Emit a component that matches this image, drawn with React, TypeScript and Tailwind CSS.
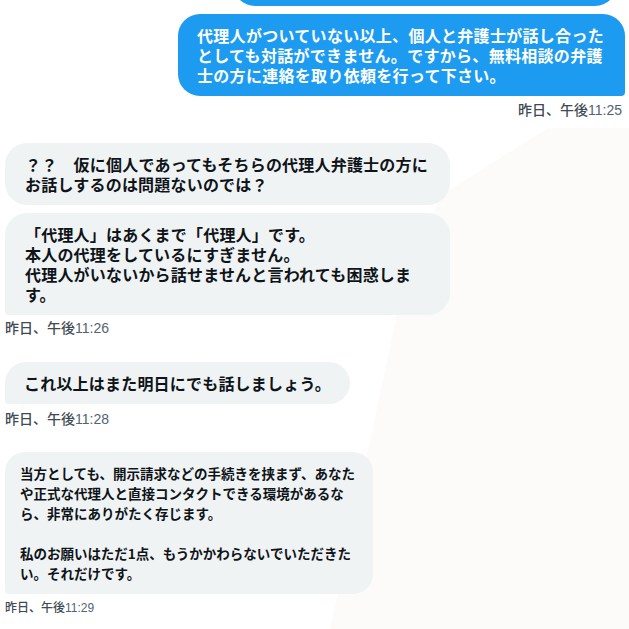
const jp = "font-['Noto_Sans_CJK_JP','Noto_Sans',sans-serif]";
const stamp = "font-['Liberation_Sans','Noto_Sans_CJK_JP',sans-serif]";

function Stamp({ time, right, small }: { time: string; right?: boolean; small?: boolean }) {
  return (
    <div
      className={`${stamp} ${small ? "text-[12px] leading-4" : "text-[14px] leading-4"} text-[#536471] ${
        right ? "text-right pr-[7px]" : "pl-[5px]"
      }`}
    >
      <span className="text-[#3f4a54] font-medium">昨日、午後</span>
      {time}
    </div>
  );
}

function Bubble({ lines, className = "" }: { lines: string[]; className?: string }) {
  return (
    <div className={`bg-[#eff3f4] text-[#0f1419] py-[11px] ${className}`}>
      {lines.map((l, i) => (
        <div key={i} className="min-h-5">
          {l}
        </div>
      ))}
    </div>
  );
}

export default function App() {
  return (
    <div className={`relative w-[629px] h-[629px] overflow-hidden bg-white ${jp}`}>
      {/* faint watermark behind the chat */}
      <svg className="absolute inset-0 pointer-events-none" width="629" height="629" viewBox="0 0 629 629">
        <polygon points="440,196 548,128 629,128 629,629 330,629 400,300" fill="#fcfbfa" />
      </svg>

      <div className="relative flex flex-col">
        {/* previous outgoing bubble tail */}
        <div className="flex justify-end pr-[12px]">
          <div className="w-[384px] h-[26px] -mt-[20px] bg-[#1d9bf0] rounded-b-[22px]" />
        </div>

        <div className="flex justify-end pr-[4px] mt-[8px]">
          <div className="w-[447px] bg-[#1d9bf0] text-white font-semibold text-[16px] leading-5 tracking-[0.3px] px-[19px] py-[11px] rounded-[22px] rounded-br-[4px]">
            代理人がついていない以上、個人と弁護士が話し合ったとしても対話ができません。ですから、無料相談の弁護士の方に連絡を取り依頼を行って下さい。
          </div>
        </div>
        <div className="mt-[6px]">
          <Stamp time="11:25" right />
        </div>

        <div className="flex flex-col items-start pl-[5px] mt-[25px] gap-[8px] font-semibold text-[16px] leading-5 tracking-[0.2px]">
          <Bubble
            className="w-[445px] px-[20px] rounded-[22px] rounded-bl-[22px]"
            lines={["？？　仮に個人であってもそちらの代理人弁護士の方にお話しするのは問題ないのでは？"]}
          />
          <Bubble
            className="w-[445px] px-[20px] rounded-[22px] rounded-bl-[4px]"
            lines={[
              "「代理人」はあくまで「代理人」です。",
              "本人の代理をしているにすぎません。",
              "代理人がいないから話せませんと言われても困惑します。",
            ]}
          />
        </div>
        <div className="mt-[5px]">
          <Stamp time="11:26" />
        </div>

        <div className="flex pl-[5px] mt-[26px] font-semibold text-[16px] leading-5 tracking-[0.2px]">
          <Bubble
            className="px-[19px] rounded-[22px] rounded-bl-[4px]"
            lines={["これ以上はまた明日にでも話しましょう。"]}
          />
        </div>
        <div className="mt-[7px]">
          <Stamp time="11:28" />
        </div>

        <div className="flex pl-[5px] mt-[25px] font-semibold text-[13.5px] leading-5">
          <Bubble
            className="w-[368px] pl-[15px] pr-[12px] rounded-[20px] rounded-bl-[4px]"
            lines={[
              "当方としても、開示請求などの手続きを挟まず、あなたや正式な代理人と直接コンタクトできる環境があるなら、非常にありがたく存じます。",
              "",
              "私のお願いはただ1点、もうかかわらないでいただきたい。それだけです。",
            ]}
          />
        </div>
        <div className="mt-[6px]">
          <Stamp time="11:29" small />
        </div>
      </div>
    </div>
  );
}
